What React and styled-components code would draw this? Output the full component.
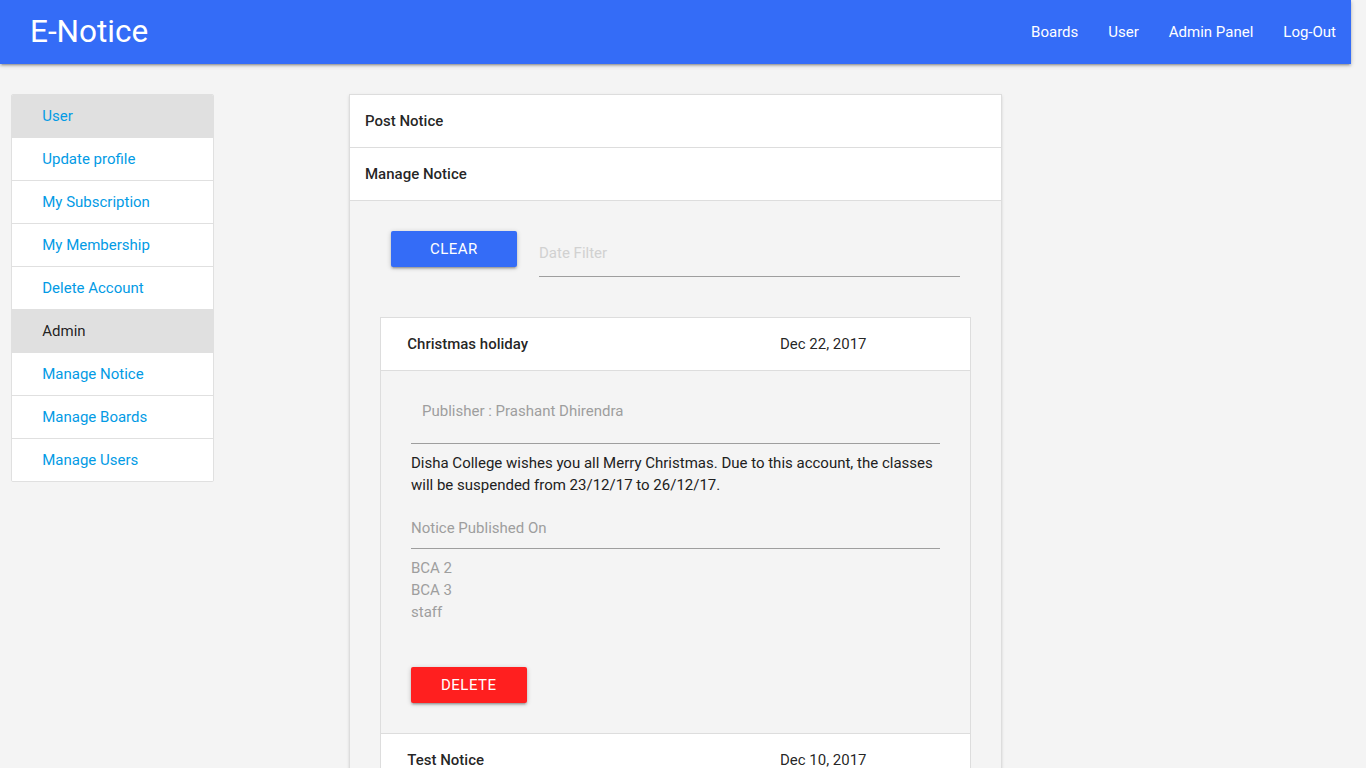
import React from 'react';
import styled, { createGlobalStyle } from 'styled-components';

const GlobalStyle = createGlobalStyle`
    html {
        font-size: 15px;
    }
    body {
        margin: 0;
        background: #f4f4f4;
        font-family: Roboto, "Liberation Sans", sans-serif;
        color: rgba(0, 0, 0, 0.87);
    }
    * {
        box-sizing: border-box;
    }
`;

const userLinks = ['Update profile', 'My Subscription', 'My Membership', 'Delete Account'];
const adminLinks = ['Manage Notice', 'Manage Boards', 'Manage Users'];

const notices = [
    {
        title: 'Christmas holiday',
        date: 'Dec 22, 2017',
        open: true,
        publisher: 'Prashant Dhirendra',
        text: 'Disha College wishes you all Merry Christmas. Due to this account, the classes will be suspended from 23/12/17 to 26/12/17.',
        boards: ['BCA 2', 'BCA 3', 'staff'],
    },
    { title: 'Test Notice', date: 'Dec 10, 2017' },
    { title: 'Exam Schedule', date: 'Dec 02, 2017' },
    { title: 'Sports Meet', date: 'Nov 24, 2017' },
    { title: 'Library Timings', date: 'Nov 15, 2017' },
    { title: 'Fee Reminder', date: 'Nov 03, 2017' },
];

export default function App() {
    return (
        <Page>
            <GlobalStyle />
            <Navbar>
                <Brand>E-Notice</Brand>
                <NavLinks>
                    <NavLink>Boards</NavLink>
                    <NavLink>User</NavLink>
                    <NavLink>Admin Panel</NavLink>
                    <NavLink>Log-Out</NavLink>
                </NavLinks>
            </Navbar>

            <Row>
                <SideCol>
                    <Collection>
                        <CollectionHeader>User</CollectionHeader>
                        {userLinks.map(l => <CollectionItem key={l}>{l}</CollectionItem>)}
                        <CollectionHeader dark>Admin</CollectionHeader>
                        {adminLinks.map(l => <CollectionItem key={l}>{l}</CollectionItem>)}
                    </Collection>
                </SideCol>

                <MainCol>
                    <Collapsible>
                        <PanelHeader>Post Notice</PanelHeader>
                        <PanelHeader>Manage Notice</PanelHeader>
                        <PanelBody>
                            <FilterRow>
                                <FilterCell>
                                    <Button color="#346cf7" full>Clear</Button>
                                </FilterCell>
                                <FilterCell>
                                    <DateInput placeholder="Date Filter" />
                                </FilterCell>
                            </FilterRow>

                            <NoticeList>
                                {notices.map(n => (
                                    <React.Fragment key={n.title}>
                                        <NoticeHeader>
                                            <NoticeTitle>{n.title}</NoticeTitle>
                                            <NoticeDate>{n.date}</NoticeDate>
                                        </NoticeHeader>
                                        {n.open && (
                                            <NoticeBody>
                                                <Publisher>Publisher : {n.publisher}</Publisher>
                                                <Rule />
                                                <NoticeText>{n.text}</NoticeText>
                                                <MutedLabel>Notice Published On</MutedLabel>
                                                <Rule />
                                                <BoardList>
                                                    {n.boards.map(b => <div key={b}>{b}</div>)}
                                                </BoardList>
                                                <Button color="#ff1f1f">Delete</Button>
                                            </NoticeBody>
                                        )}
                                    </React.Fragment>
                                ))}
                            </NoticeList>
                        </PanelBody>
                    </Collapsible>
                </MainCol>
            </Row>
        </Page>
    );
}

/********************** Styled Components **********************/

// the reference leaves a 15px strip on the right for the window scrollbar
const Page = styled.div`
    width: calc(100% - 15px);
`;

const Navbar = styled.nav`
    height: 64px;
    background: #346cf7;
    color: #fff;
    display: flex;
    align-items: center;
    justify-content: space-between;
    box-shadow: 0 2px 2px 0 rgba(0,0,0,0.14), 0 3px 1px -2px rgba(0,0,0,0.12), 0 1px 5px 0 rgba(0,0,0,0.2);
`;

const Brand = styled.div`
    font-size: 2.1rem;
    padding-left: 30px;
    line-height: 64px;
`;

const NavLinks = styled.ul`
    display: flex;
    list-style: none;
    margin: 0;
    padding: 0;
`;

const NavLink = styled.li`
    padding: 0 15px;
    font-size: 15px;
    line-height: 64px;
    cursor: pointer;
`;

const Row = styled.div`
    display: grid;
    grid-template-columns: repeat(12, 1fr);
    padding-top: 30px;
    align-items: start;
`;

const SideCol = styled.div`
    grid-column: 1 / span 2;
    padding: 0 11.25px;
`;

const MainCol = styled.div`
    grid-column: 4 / span 6;
    padding: 0 11.25px;
    padding-bottom: 20px;
`;

const Collection = styled.div`
    border: 1px solid #e0e0e0;
    border-radius: 2px;
    overflow: hidden;
    background: #fff;
`;

const CollectionItem = styled.div`
    padding: 10px 30px;
    line-height: 22px;
    font-size: 15px;
    color: #039be5;
    border-bottom: 1px solid #e0e0e0;
    background: #fff;

    &:last-child {
        border-bottom: none;
    }
`;

const CollectionHeader = styled(CollectionItem)`
    background: #e0e0e0;
    color: ${props => props.dark ? 'rgba(0,0,0,0.87)' : '#039be5'};
`;

const Collapsible = styled.div`
    border: 1px solid #ddd;
    border-bottom: none;
    box-shadow: 0 2px 2px 0 rgba(0,0,0,0.08), 0 1px 4px 0 rgba(0,0,0,0.06);
`;

const PanelHeader = styled.div`
    padding: 15px;
    line-height: 22px;
    font-size: 15px;
    font-weight: 500;
    background: #fff;
    border-bottom: 1px solid #ddd;
`;

const PanelBody = styled.div`
    padding: 30px;
    border-bottom: 1px solid #ddd;
`;

const FilterRow = styled.div`
    display: grid;
    grid-template-columns: 1fr 3fr;
    margin-bottom: 40px;
`;

const FilterCell = styled.div`
    padding: 0 11.25px;
`;

const Button = styled.button`
    display: block;
    width: ${props => props.full ? '100%' : 'auto'};
    height: 36px;
    padding: 0 30px;
    border: none;
    border-radius: 2px;
    background: ${props => props.color};
    color: #fff;
    font-family: Roboto, "Liberation Sans", sans-serif;
    font-size: 15px;
    letter-spacing: 0.5px;
    text-transform: uppercase;
    box-shadow: 0 2px 2px 0 rgba(0,0,0,0.14), 0 3px 1px -2px rgba(0,0,0,0.12), 0 1px 5px 0 rgba(0,0,0,0.2);
`;

const DateInput = styled.input`
    display: block;
    width: 100%;
    height: 46px;
    border: none;
    border-bottom: 1px solid #9e9e9e;
    background: transparent;
    outline: none;
    padding: 0 0 2px;
    font-family: Roboto, "Liberation Sans", sans-serif;
    font-size: 15px;

    &::placeholder {
        color: #d1d1d1;
    }
`;

const NoticeList = styled.div`
    border: 1px solid #ddd;
    border-bottom: none;
`;

const NoticeHeader = styled.div`
    display: grid;
    grid-template-columns: 2fr 1fr;
    padding: 15px;
    line-height: 22px;
    font-size: 15px;
    background: #fff;
    border-bottom: 1px solid #ddd;
`;

const NoticeTitle = styled.div`
    padding: 0 11.25px;
    font-weight: 500;
`;

const NoticeDate = styled.div`
    padding: 0 11.25px;
`;

const NoticeBody = styled.div`
    padding: 29px 30px 30px;
    border-bottom: 1px solid #ddd;
    font-size: 15px;
    line-height: 22px;
`;

const Publisher = styled.div`
    padding-left: 11px;
    color: #9e9e9e;
    margin-bottom: 21px;
`;

const Rule = styled.hr`
    margin: 0 0 8px;
    border: none;
    border-top: 1px solid #9e9e9e;
`;

const NoticeText = styled.div`
    color: #212121;
    margin-bottom: 21px;
`;

const MutedLabel = styled.div`
    color: #9e9e9e;
    margin-bottom: 9px;
`;

const BoardList = styled.div`
    color: #9e9e9e;
    margin-bottom: 44px;
`;
